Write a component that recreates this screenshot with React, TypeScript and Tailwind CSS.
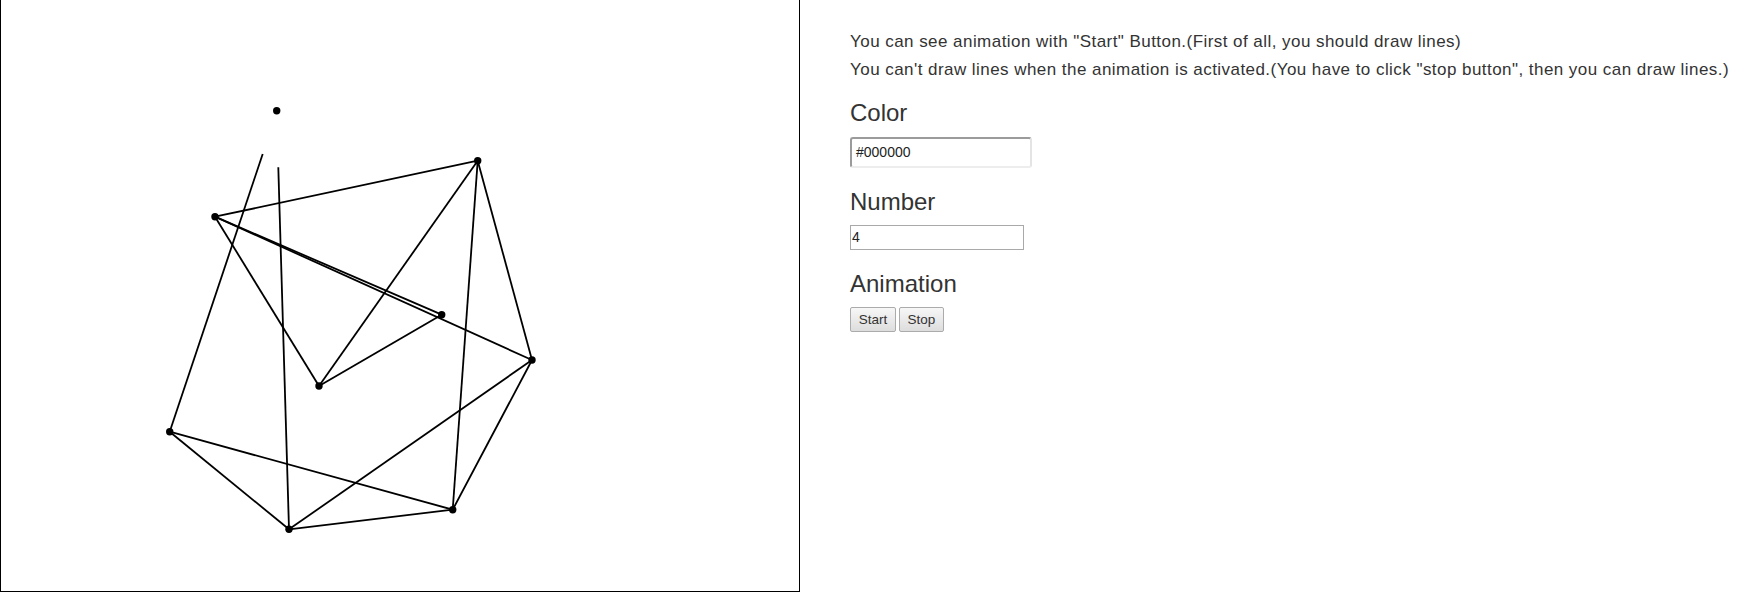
import React from 'react';

type Pt = [number, number];

const P: Record<string, Pt> = {
  a: [477.7, 160.7],
  b: [215, 216.7],
  c: [441.7, 314.7],
  d: [532, 360],
  e: [319, 386],
  f: [169.7, 431.7],
  g: [289, 529.3],
  h: [452.7, 509.7],
};

const S1: Pt = [262.7, 154];
const S2: Pt = [278.3, 167.3];
const LONE: Pt = [276.7, 110.7];

const lines: [Pt, Pt][] = [
  [P.b, P.a],
  [P.a, P.e],
  [P.a, P.h],
  [P.a, P.d],
  [P.b, P.e],
  [P.b, P.c],
  [P.b, P.d],
  [P.c, P.e],
  [P.f, S1],
  [P.f, P.g],
  [P.f, P.h],
  [P.g, S2],
  [P.g, P.d],
  [P.g, P.h],
  [P.h, P.d],
];

function Board() {
  return (
    <div className="h-[592px] w-[800px] shrink-0 border-x border-b border-black bg-white">
      <svg width={798} height={591} viewBox="1 0 798 591" className="block">
        {lines.map(([p, q], i) => (
          <line key={i} x1={p[0]} y1={p[1]} x2={q[0]} y2={q[1]} stroke="#000" strokeWidth={1.8} />
        ))}
        {Object.values(P).map(([x, y], i) => (
          <circle key={i} cx={x} cy={y} r={3.7} fill="#000" />
        ))}
        <circle cx={LONE[0]} cy={LONE[1]} r={3.7} fill="#000" />
      </svg>
    </div>
  );
}

function Btn({ children, w }: { children: React.ReactNode; w: string }) {
  return (
    <button
      className={`${w} h-[25px] rounded-[2px] border border-[#ababab] bg-gradient-to-b from-[#f7f7f7] to-[#dddddd] text-[13.5px] leading-none text-[#333]`}
    >
      {children}
    </button>
  );
}

export default function App() {
  return (
    <div className="flex min-h-[605px] w-full bg-white font-['Liberation_Sans',Arial,sans-serif] text-[#333]">
      <Board />
      <div className="ml-[50px] flex flex-col items-start pt-[32px]">
        <p className="text-[17px] leading-[20px] tracking-[0.45px]">
          You can see animation with "Start" Button.(First of all, you should draw lines)
        </p>
        <p className="mt-[8px] text-[17px] leading-[20px] tracking-[0.45px]">
          You can't draw lines when the animation is activated.(You have to click "stop button", then you can draw lines.)
        </p>

        <h3 className="mt-[20px] text-[24px] leading-[26px]">Color</h3>
        <div className="mt-[11px] flex h-[31px] w-[182px] items-center rounded-[3px] border-2 border-t-[#9b9b9b] border-l-[#9b9b9b] border-b-[#ededed] border-r-[#e4e4e4] pl-[4px] text-[14px] text-[#222]">
          #000000
        </div>

        <h3 className="mt-[21px] text-[24px] leading-[26px]">Number</h3>
        <div className="mt-[10px] flex h-[25px] w-[174px] items-center border border-[#a9a9a9] pl-[1px] text-[14px] text-[#222]">
          4
        </div>

        <h3 className="mt-[21px] text-[24px] leading-[26px]">Animation</h3>
        <div className="mt-[10px] flex gap-[3px]">
          <Btn w="w-[46px]">Start</Btn>
          <Btn w="w-[45px]">Stop</Btn>
        </div>
      </div>
    </div>
  );
}
